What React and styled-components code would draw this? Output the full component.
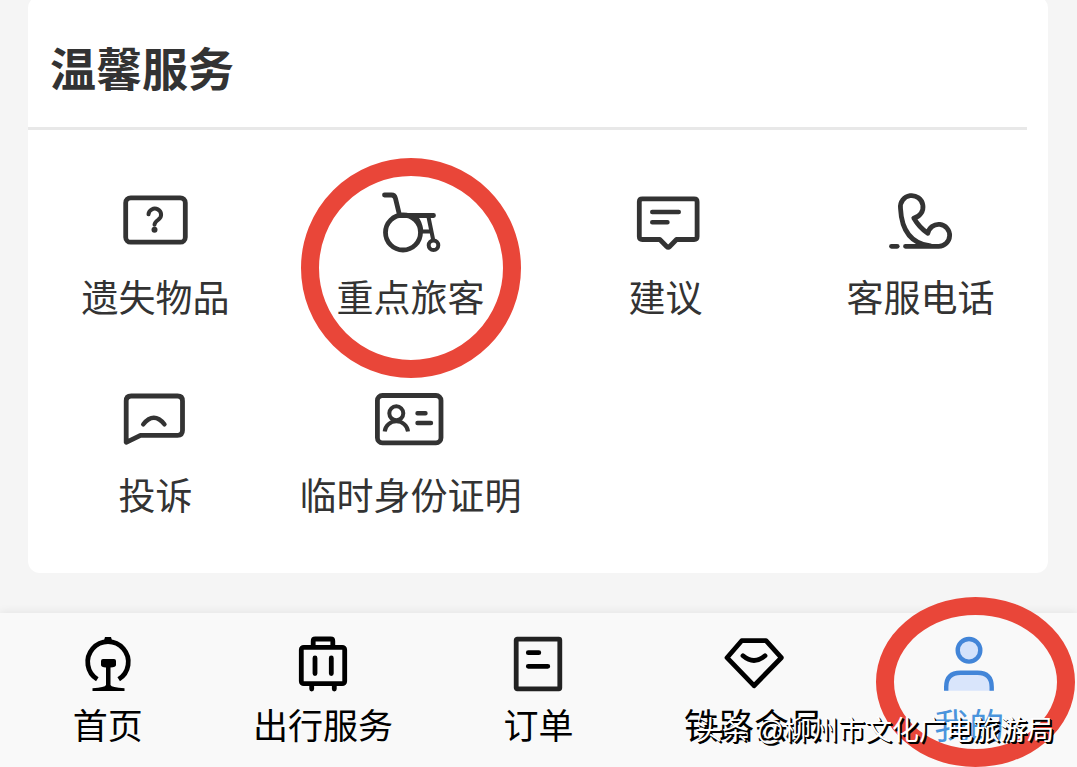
import { useState } from "react";
import styled, { createGlobalStyle } from "styled-components";

const GlobalStyle = createGlobalStyle`
  * {
    box-sizing: border-box;
  }
  body {
    margin: 0;
    background-color: #f5f5f5;
    font-family: "Noto Sans CJK SC", "Noto Sans", sans-serif;
  }
`;

const Page = styled.div`
  position: relative;
  display: flex;
  flex-direction: column;
  min-height: 100vh;
  overflow: hidden;
`;

const Card = styled.section`
  margin: -4px 29px 0 28px;
  padding-bottom: 53px;
  border-radius: 12px;
  background-color: white;
`;

const Title = styled.h2`
  margin: 0 21px 0 0;
  padding: 36px 0 27px 22px;
  border-bottom: 3px solid #e8e8e8;
  color: #333;
  font-size: 46px;
  font-weight: 700;
  line-height: 68px;
`;

const Services = styled.div`
  display: grid;
  grid-template-columns: repeat(4, 1fr);
  row-gap: 66px;
  padding-top: 60px;
`;

const Service = styled.button`
  position: relative;
  display: flex;
  flex-direction: column;
  align-items: center;
  gap: 16px;
  padding: 0;
  border: none;
  background: none;
  color: #333;
  font-family: inherit;
  font-size: 37px;
  line-height: 52px;
  white-space: nowrap;
  cursor: pointer;
`;

const ServiceIcon = styled.svg`
  width: 80px;
  height: 64px;
  fill: none;
  stroke: #333;
  stroke-width: 4.8;
  stroke-linecap: round;
  stroke-linejoin: round;
`;

const TabBar = styled.nav`
  display: grid;
  grid-template-columns: repeat(5, 1fr);
  flex: 1;
  margin-top: 40px;
  padding-top: 21px;
  background-color: #f9f9f9;
  box-shadow: 0 -2px 8px rgba(0, 0, 0, 0.06);
`;

const Tab = styled.a`
  position: relative;
  display: flex;
  flex-direction: column;
  align-items: center;
  gap: 4px;
  color: ${(props) => (props.$active ? "#4a94dc" : "#000")};
  font-size: 35px;
  line-height: 52px;
  text-decoration: none;
  white-space: nowrap;
`;

const TabIcon = styled.svg`
  width: 64px;
  height: 60px;
  fill: none;
  stroke: currentColor;
  stroke-width: 4.8;
  stroke-linecap: round;
  stroke-linejoin: round;
`;

const Ring = styled.span`
  position: absolute;
  top: ${(props) => props.$top}px;
  left: 50%;
  width: ${(props) => props.$width}px;
  height: ${(props) => props.$height}px;
  margin-left: ${(props) => props.$shift}px;
  border: 18px solid #e94639;
  border-radius: 50%;
  pointer-events: none;
`;

const Watermark = styled.span`
  position: absolute;
  right: 23px;
  bottom: 16px;
  color: white;
  font-family: "Liberation Sans", "Noto Sans CJK SC", sans-serif;
  font-size: 27px;
  line-height: 40px;
  text-shadow: 1px 1px 0 #000, 2px 2px 0 #000;
  white-space: nowrap;
  pointer-events: none;
`;

const services = [
  {
    name: "遗失物品",
    icon: (
      <>
        <rect x="9.7" y="7.8" width="59.6" height="44.4" rx="5" />
        <path d="M32.5 24.3a6.3 6 0 1 1 10 5.2c-3 2.2-4 3-4 5.3" strokeWidth="4" />
        <circle cx="38.5" cy="39.8" r="3" fill="#333" stroke="none" />
      </>
    ),
  },
  {
    name: "重点旅客",
    marked: true,
    icon: (
      <>
        <path d="M13.5 5h7q3.2 0 4 3.5L28.6 25.5H62.5" />
        <circle cx="32" cy="42.5" r="17.5" />
        <path d="M44.5 27q5 5 6 14.500M50 41.5h10M57.5 27l4.500 22" strokeWidth="4" />
        <circle cx="62.5" cy="55.3" r="4.8" strokeWidth="4" />
      </>
    ),
  },
  {
    name: "建议",
    icon: (
      <>
        <path d="M16.3 8.8h51.8q3 0 3 3v34.7q0 3-3 3H50.5l-6.8 7q-1.5 1.5-3 0l-6.9-7H16.3q-3 0-3-3V11.8q0-3 3-3z" />
        <path d="M26.2 22h26.6M26.2 32.3h15.3" strokeWidth="4.4" />
      </>
    ),
  },
  {
    name: "客服电话",
    icon: (
      <>
        <path d="M24.5 56.3h33.3a11 11 0 1 0-11-13C42 40 36.5 34.5 32.8 28a11.3 11.3 0 1 0-13.3-9.7C20.5 39 29.5 53.5 49.5 56" />
        <path d="M10.5 56.3h5.7" />
      </>
    ),
  },
  {
    name: "投诉",
    icon: (
      <>
        <path d="M10.2 54.3V13q0-5 5-5h46.3q5 0 5 5v29.3q0 5-5 5h-37z" />
        <path d="M27.2 36.3q10.6-13 21.3 0" strokeWidth="4.4" />
      </>
    ),
  },
  {
    name: "临时身份证明",
    icon: (
      <>
        <rect x="6.4" y="7.5" width="63.6" height="47.3" rx="5" />
        <circle cx="25.3" cy="25.3" r="7" strokeWidth="4" />
        <path
          d="M13.7 43.5a11.7 11.2 0 0 1 23.3 0"
          strokeWidth="4"
          strokeLinecap="butt"
        />
        <path d="M46.5 25.3h8M46.5 35h13.500" strokeWidth="4.4" />
      </>
    ),
  },
];

const tabs = [
  {
    name: "首页",
    icon: (
      <>
        <path d="M21.3 45.2a20.3 20.3 0 1 1 21.4 0" strokeLinecap="butt" />
        <path
          d="M27.500 8l1.500-5h6l1.500 5zM27 25h11q2 0 2 2v4q0 2-5.500 2.500V51q1 2.500 14 3.200V57H16.500v-2.800Q29 53.500 30 51V33.500Q25 33 25 31v-4q0-2 2-2z"
          fill="currentColor"
          stroke="none"
        />
      </>
    ),
  },
  {
    name: "出行服务",
    icon: (
      <>
        <rect x="10.3" y="13.3" width="43.4" height="36.4" rx="2.5" />
        <path d="M22.2 12V7q0-2 2-2h15.6q2 0 2 2v5M20.7 51v4M43.3 51v4" />
        <path d="M24 24v15.5M40.3 24v15.5" />
      </>
    ),
  },
  {
    name: "订单",
    icon: (
      <>
        <rect x="10.2" y="5.2" width="43.6" height="49.6" rx="1" stroke="#222" />
        <path d="M22.3 18.7h10.5M22.3 32.3h19.5" />
      </>
    ),
  },
  {
    name: "铁路会员",
    icon: (
      <>
        <path d="M19.7 6.7H44l15.3 17L32 51.7l-27-28z" />
        <path d="M21 21.8q11 9.5 22 0" />
      </>
    ),
  },
  {
    name: "我的",
    marked: true,
    icon: (
      <>
        <circle cx="32" cy="16.3" r="11.3" fill="#d3e2fb" stroke="#4285d8" strokeWidth="4.4" />
        <path
          d="M9.2 56.7V53q0-14.3 14.3-14.3h17Q54.7 38.7 54.7 53v3.7"
          fill="#d9e5fb"
          stroke="#4285d8"
          strokeWidth="4.4"
          strokeLinecap="butt"
        />
      </>
    ),
  },
];

const App = () => {
  const [active, setActive] = useState("我的");

  return (
    <Page>
      <GlobalStyle />
      <Card>
        <Title>温馨服务</Title>
        <Services>
          {services.map((item) => (
            <Service key={item.name} type="button">
              <ServiceIcon viewBox="0 0 80 64" aria-hidden="true">
                {item.icon}
              </ServiceIcon>
              {item.name}
              {item.marked && (
                <Ring $top={-32} $width={220} $height={220} $shift={-110} />
              )}
            </Service>
          ))}
        </Services>
      </Card>
      <TabBar>
        {tabs.map((tab) => (
          <Tab
            key={tab.name}
            href="#"
            $active={active === tab.name}
            onClick={() => setActive(tab.name)}
          >
            <TabIcon viewBox="0 0 64 60" aria-hidden="true">
              {tab.icon}
            </TabIcon>
            {tab.name}
            {tab.marked && (
              <Ring $top={-37} $width={199} $height={170} $shift={-93} />
            )}
          </Tab>
        ))}
      </TabBar>
      <Watermark>头条 @柳州市文化广电旅游局</Watermark>
    </Page>
  );
};

export default App;
